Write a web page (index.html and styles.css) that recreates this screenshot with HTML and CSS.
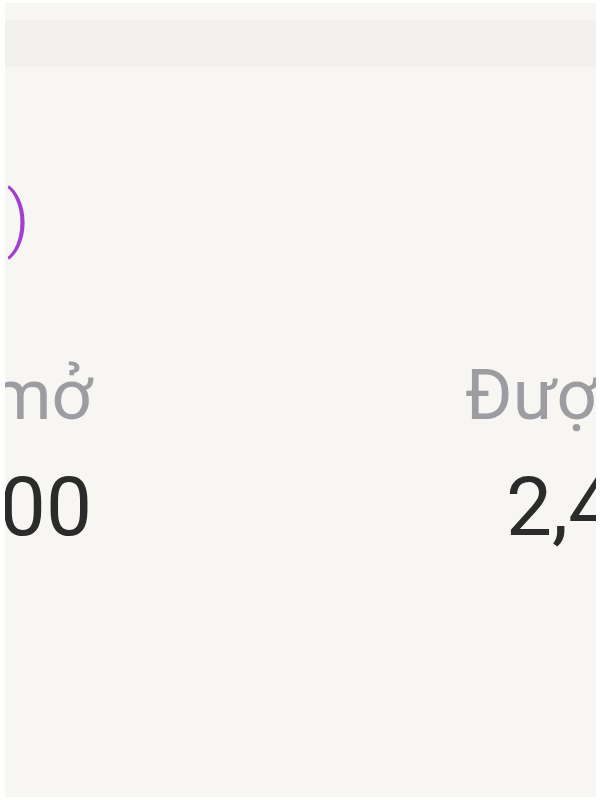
FILE: index.html
```html
<!DOCTYPE html>
<html lang="vi">
<head>
  <meta charset="UTF-8" />
  <meta name="viewport" content="width=device-width, initial-scale=1.0"/>
  <title>Tổng quan</title>
  <link rel="stylesheet" href="styles.css">
</head>
<body>
  <div class="panel">
    <div class="topbar"></div>

    <div class="title">Yêu cầu (5)</div>

    <div class="stats">
      <div class="stat stat-left">
        <div class="label">Đang mở</div>
        <div class="value">1,200,000</div>
      </div>
      <div class="stat stat-right">
        <div class="label">Được duyệt</div>
        <div class="value">2,400,000</div>
      </div>
    </div>
  </div>
</body>
</html>
```

FILE: styles.css
```css
body {
  margin: 0;
  background: #ffffff;
  font-family: Roboto, "Noto Sans", sans-serif;
  padding: 3px 4px 3px 5px;
}
.panel {
  height: 794px;
  background: #f7f6f3;
  overflow: hidden;
}
.topbar {
  height: 47px;
  margin-top: 17px;
  background: #f1f0ec;
}
.title {
  width: 400px;
  margin-left: -375px;
  margin-top: 107px;
  text-align: right;
  color: #a13fcf;
  font-size: 72px;
  font-weight: 300;
  line-height: 90px;
  white-space: nowrap;
}
.stats {
  display: flex;
  margin-top: 89px;
}
.stat {
  flex: none;
  white-space: nowrap;
}
.stat-left {
  width: 400px;
  margin-left: -313px;
  text-align: right;
}
.stat-right {
  margin-left: 373px;
}
.label {
  color: #9d9da1;
  font-size: 71px;
  line-height: 84px;
}
.value {
  color: #2b2b2b;
  font-size: 82px;
  line-height: 100px;
  margin-top: 20px;
}
.stat-right .value {
  padding-left: 41px;
}
```
